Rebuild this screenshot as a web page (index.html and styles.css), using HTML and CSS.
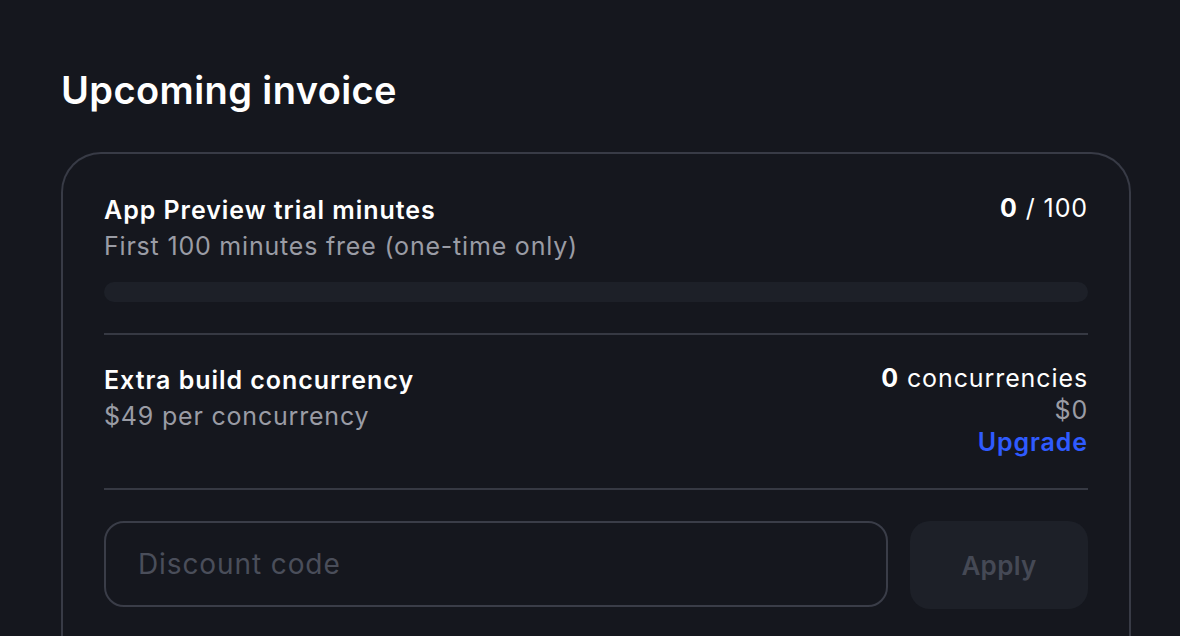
FILE: index.html
```html
<!DOCTYPE html>
<html>
<head>
<meta charset="utf-8">
<link rel="stylesheet" href="styles.css">
</head>
<body>
<main class="page">
  <h1 class="title">Upcoming invoice</h1>
  <section class="card">
    <div class="row">
      <div class="info">
        <div class="label">App Preview trial minutes</div>
        <div class="sub">First 100 minutes free (one-time only)</div>
      </div>
      <div class="value"><b>0</b> / 100</div>
    </div>
    <div class="bar"></div>
    <hr class="divider">
    <div class="row row2">
      <div class="info">
        <div class="label">Extra build concurrency</div>
        <div class="sub">$49 per concurrency</div>
      </div>
      <div class="right">
        <div class="value"><b>0</b> concurrencies</div>
        <div class="price">$0</div>
        <a class="upgrade">Upgrade</a>
      </div>
    </div>
    <hr class="divider divider2">
    <div class="discount">
      <div class="input">Discount code</div>
      <button class="apply">Apply</button>
    </div>
  </section>
</main>
</body>
</html>
```

FILE: styles.css
```css
html, body {
  margin: 0;
  background: #15171e;
}
body {
  font-family: Inter, "Noto Sans", sans-serif;
  color: #ffffff;
}
.page {
  padding: 64px 49px 0 61px;
}
.title {
  margin: 0;
  font-size: 38px;
  font-weight: 600;
  line-height: 52px;
  letter-spacing: 0.4px;
}
.card {
  margin-top: 36px;
  border: 2px solid #383b46;
  border-bottom: none;
  border-radius: 40px 40px 0 0;
  padding: 38px 41px 40px;
  height: 460px;
}
.row {
  display: flex;
  justify-content: space-between;
  align-items: flex-start;
}
.label {
  font-size: 25px;
  font-weight: 600;
  line-height: 36px;
  letter-spacing: 0.95px;
}
.sub {
  font-size: 25px;
  line-height: 36px;
  color: #9a9ca5;
  letter-spacing: 0.8px;
}
.value {
  font-size: 25px;
  line-height: 32px;
  letter-spacing: 0.9px;
}
.value b { font-weight: 700; }
.bar {
  margin-top: 18px;
  height: 20px;
  border-radius: 10px;
  background: #1d2028;
}
.divider {
  margin: 31px 0 0;
  border: none;
  height: 2px;
  background: #363943;
}
.row2 { margin-top: 27px; }
.right {
  display: flex;
  flex-direction: column;
  align-items: flex-end;
}
.price {
  font-size: 25px;
  line-height: 32px;
  color: #9a9ca5;
  letter-spacing: 0.8px;
}
.upgrade {
  font-size: 25px;
  line-height: 32px;
  font-weight: 600;
  color: #2f5bff;
  letter-spacing: 0.9px;
}
.divider2 { margin-top: 30px; }
.discount {
  margin-top: 31px;
  display: flex;
  gap: 22px;
}
.input {
  flex: 1;
  height: 82px;
  border: 2px solid #3a3d48;
  border-radius: 20px;
  display: flex;
  align-items: center;
  padding-left: 32px;
  font-size: 28px;
  letter-spacing: 0.9px;
  color: #4a4e5a;
}
.apply {
  width: 178px;
  height: 88px;
  border: none;
  border-radius: 20px;
  background: #1d2028;
  color: #454955;
  font-family: inherit;
  font-size: 26px;
  font-weight: 600;
  letter-spacing: 0.3px;
}
```
